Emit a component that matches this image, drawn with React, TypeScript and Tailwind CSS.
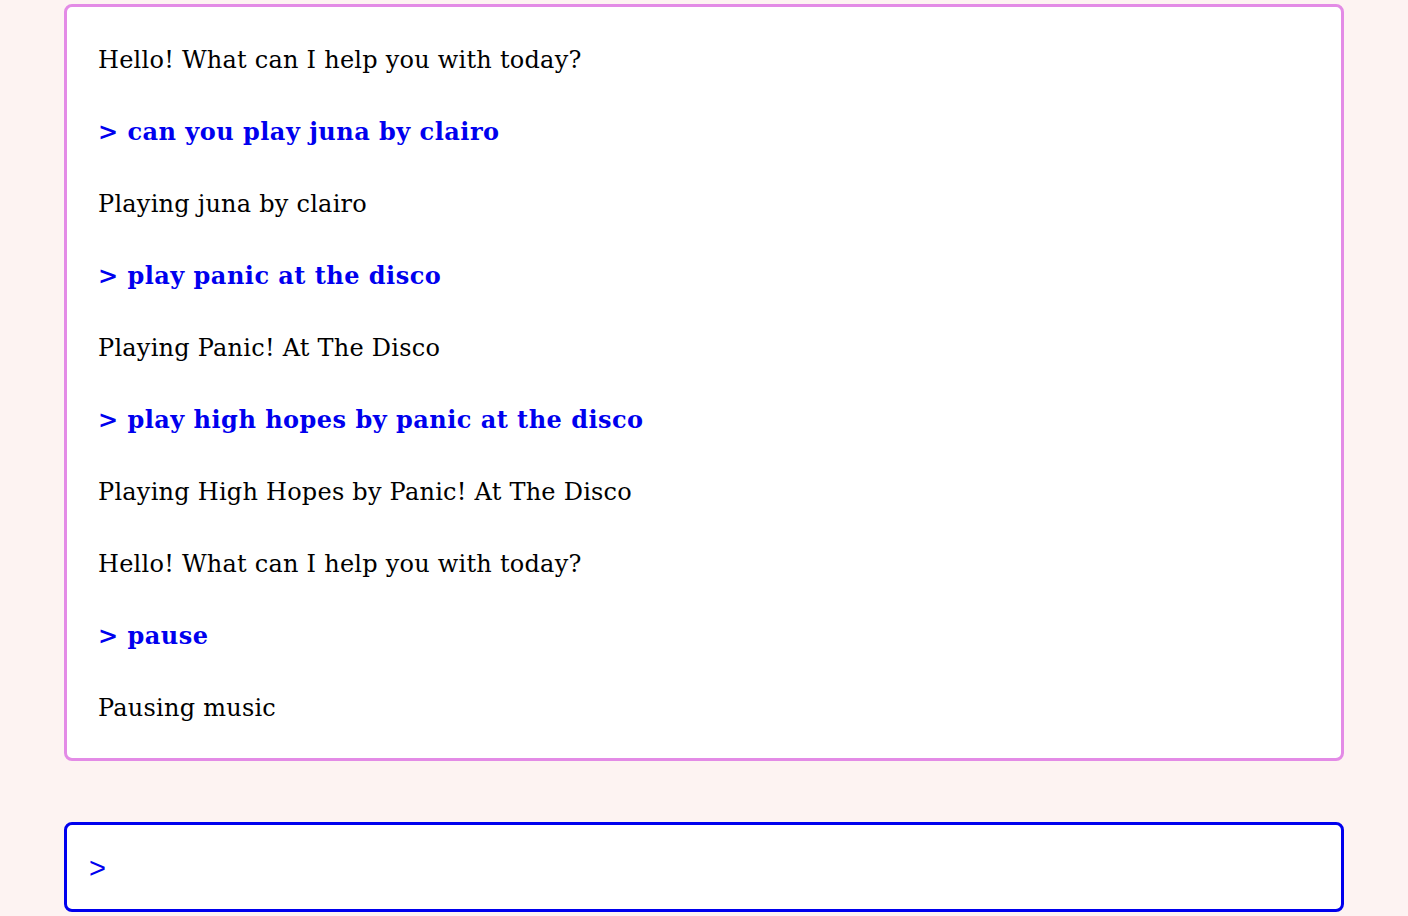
import React, { useState } from 'react';

type Line = { from: 'bot' | 'user'; text: string };

const lines: Line[] = [
  { from: 'bot', text: 'Hello! What can I help you with today?' },
  { from: 'user', text: 'can you play juna by clairo' },
  { from: 'bot', text: 'Playing juna by clairo' },
  { from: 'user', text: 'play panic at the disco' },
  { from: 'bot', text: 'Playing Panic! At The Disco' },
  { from: 'user', text: 'play high hopes by panic at the disco' },
  { from: 'bot', text: 'Playing High Hopes by Panic! At The Disco' },
  { from: 'bot', text: 'Hello! What can I help you with today?' },
  { from: 'user', text: 'pause' },
  { from: 'bot', text: 'Pausing music' },
];

const App: React.FC = () => {
  const [input, setInput] = useState('');

  return (
    <div className="min-h-screen bg-[#fdf3f2] font-['DejaVu_Serif',serif]">
      <div className="max-w-[1280px] mx-auto pt-[4px] pb-[4px]">
        {/* conversation */}
        <div className="bg-white border-[3px] border-[#e38be6] rounded-lg pt-[35px] pb-[32px] px-[31px] flex flex-col gap-[36px]">
          {lines.map((l, i) =>
            l.from === 'user' ? (
              <p key={i} className="text-[24px] leading-[36px] font-bold tracking-[0.02em] text-[#0000ee]">
                &gt; {l.text}
              </p>
            ) : (
              <p key={i} className="text-[24px] leading-[36px] tracking-[0.01em] text-black">
                {l.text}
              </p>
            )
          )}
        </div>

        {/* prompt */}
        <div className="mt-[61px] h-[90px] bg-white border-[3px] border-[#0000ee] rounded-lg flex items-center px-[22px] pt-[4px] text-[#0000ee] font-['Liberation_Sans',sans-serif]">
          <span className="text-[29px] mr-2">&gt;</span>
          <input
            value={input}
            onChange={(e) => setInput(e.target.value)}
            className="flex-1 outline-none bg-transparent text-[22px] text-[#0000ee]"
          />
        </div>
      </div>
    </div>
  );
};

export default App;
